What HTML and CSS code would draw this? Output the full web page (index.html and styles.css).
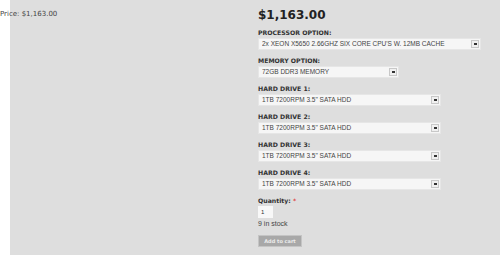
FILE: index.html
```html
<!DOCTYPE html>
<html lang="en">
<head>
    <meta charset="UTF-8">
    <title>Product</title>
    <link rel="stylesheet" href="styles.css">
</head>
<body>
    <div class="page">
        <div class="summary">
            <p class="old-price">Price: $1,163.00</p>
        </div>

        <form class="product-form">
            <h2 class="price">$1,163.00</h2>

            <div class="field">
                <label>Processor option:</label>
                <div class="select wide">
                    <select>
                        <option>2x XEON X5650 2.66GHZ SIX CORE CPU'S W. 12MB CACHE</option>
                    </select>
                </div>
            </div>

            <div class="field">
                <label>Memory option:</label>
                <div class="select small">
                    <select>
                        <option>72GB DDR3 MEMORY</option>
                    </select>
                </div>
            </div>

            <div class="field">
                <label>Hard drive 1:</label>
                <div class="select">
                    <select><option>1TB 7200RPM 3.5" SATA HDD</option></select>
                </div>
            </div>

            <div class="field">
                <label>Hard drive 2:</label>
                <div class="select">
                    <select><option>1TB 7200RPM 3.5" SATA HDD</option></select>
                </div>
            </div>

            <div class="field">
                <label>Hard drive 3:</label>
                <div class="select">
                    <select><option>1TB 7200RPM 3.5" SATA HDD</option></select>
                </div>
            </div>

            <div class="field">
                <label>Hard drive 4:</label>
                <div class="select">
                    <select><option>1TB 7200RPM 3.5" SATA HDD</option></select>
                </div>
            </div>

            <div class="quantity">
                <label>Quantity: <span class="req">*</span></label>
                <input type="text" value="1">
                <p class="stock">9 in stock</p>
            </div>

            <button type="button" class="add-btn">Add to cart</button>
        </form>
    </div>
</body>
</html>
```

FILE: styles.css
```css
body {
    margin: 0;
    background-color: white;
    font-family: 'DejaVu Sans', Verdana, sans-serif;
    color: #333;
}
.page {
    display: flex;
    margin-left: 10px;
    height: 255px;
    background-color: #dedede;
}
.summary {
    flex: 0 0 258px;
    margin-left: -10px;
}
.old-price {
    margin: 0;
    padding-top: 10px;
    font-size: 7px;
    line-height: 9px;
    color: #444;
}
.product-form {
    flex: 1;
    padding-top: 8px;
}
.price {
    margin: 0 0 6px 0;
    font-size: 12px;
    line-height: 15px;
    color: #222;
}
.field {
    margin-bottom: 7px;
}
.field label {
    display: block;
    font-size: 6.2px;
    font-weight: bold;
    line-height: 7px;
    margin-bottom: 2px;
    text-transform: uppercase;
    color: #333;
}
.select {
    position: relative;
    width: 183px;
    height: 12px;
}
.select.wide {
    width: 223px;
}
.select.small {
    width: 141px;
}
.select select {
    display: block;
    appearance: none;
    -webkit-appearance: none;
    box-sizing: border-box;
    width: 100%;
    height: 12px;
    margin: 0;
    padding: 0 0 0 3px;
    border: 1px solid #e6e6e6;
    border-radius: 0;
    background-color: #f6f6f6;
    font-family: 'Liberation Sans', Arial, sans-serif;
    font-size: 6.5px;
    line-height: 10px;
    color: #444;
    outline: none;
}
.select::after {
    content: "";
    position: absolute;
    right: 2px;
    top: 2px;
    width: 6px;
    height: 6px;
    border: 1px solid #c8c8c8;
    background: #f0f0f0 linear-gradient(#333, #333) no-repeat center / 3px 2px;
    pointer-events: none;
}
.quantity label {
    display: block;
    font-size: 6.2px;
    font-weight: bold;
    line-height: 7px;
    margin-bottom: 2px;
}
.req {
    color: #e04040;
}
.quantity input {
    display: block;
    width: 15px;
    height: 12px;
    box-sizing: border-box;
    margin: 0;
    padding: 0 0 0 3px;
    border: none;
    background-color: #f8f8f8;
    font-family: 'Liberation Sans', Arial, sans-serif;
    font-size: 6px;
    color: #333;
}
.stock {
    margin: 1px 0 0 0;
    font-family: 'Liberation Sans', Arial, sans-serif;
    font-size: 7px;
    line-height: 9px;
    color: #444;
}
.add-btn {
    display: block;
    margin-top: 7px;
    width: 44px;
    height: 12px;
    padding: 0;
    border: 1px solid #c4c4c4;
    background-color: #a8a8a8;
    color: #ececec;
    font-family: 'DejaVu Sans', Verdana, sans-serif;
    font-size: 5px;
    font-weight: bold;
    cursor: pointer;
}
```
